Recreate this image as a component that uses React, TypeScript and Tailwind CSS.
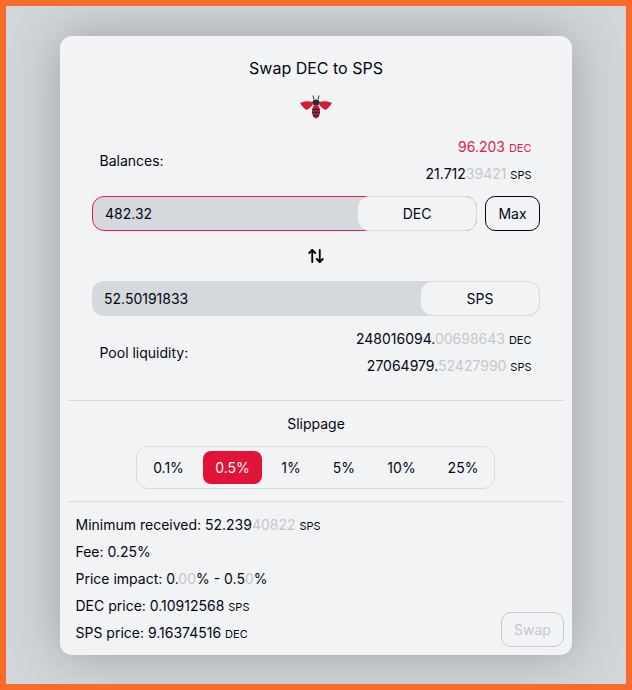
import React from 'react';
import { ArrowUpDown } from 'lucide-react';

const Unit = ({ children, className = '' }: { children: React.ReactNode; className?: string }) => (
  <span className={`text-[11px] leading-none ${className}`}>{children}</span>
);

const Dim = ({ children }: { children: React.ReactNode }) => <span className="text-[#c5c8cd]">{children}</span>;

const Bee = () => (
  <svg width="34" height="26" viewBox="0 0 34 26">
    <path d="M14 1.5 L15 5.5 M20 1.5 L19 5.5" stroke="#4b5563" strokeWidth="1.1" fill="none" />
    <path d="M1 9 C5 7 10 7 14 8 L13.5 11.5 L8 16 C5 15 3 12 1 9 Z" fill="#d01f36" />
    <path d="M33 9 C29 7 24 7 20 8 L20.5 11.5 L26 16 C29 15 31 12 33 9 Z" fill="#d01f36" />
    <ellipse cx="17" cy="8.5" rx="3.5" ry="3" fill="#2b2b33" />
    <ellipse cx="17" cy="17.5" rx="4" ry="7" fill="#c81e33" />
    <path d="M13.2 15.5 H20.8 M13 18.5 H21 M14 21.5 H20" stroke="#2b2b33" strokeWidth="1.3" />
  </svg>
);

const slippage = ['0.1%', '0.5%', '1%', '5%', '10%', '25%'];

export default function App() {
  return (
    <div className="h-[690px] w-[632px] border-[6px] border-[#f96b2a] bg-[#d2d6da] pt-[30px] font-['Inter',sans-serif] text-sm text-[#030712] overflow-hidden">
      <div className="mx-auto flex h-[619px] w-[512px] flex-col rounded-xl bg-[#f2f3f5] px-2 shadow-[0_0_50px_0_rgba(0,0,0,0.25)]">
        <h2 className="mt-[22px] text-center text-base leading-5">Swap DEC to SPS</h2>
        <div className="mt-[16px] flex justify-center">
          <Bee />
        </div>

        <div className="mt-[17px] flex items-center justify-between pl-[31.5px] pr-[32.5px]">
          <span>Balances:</span>
          <div className="flex flex-col items-end gap-[7px]">
            <div className="leading-5 text-[#e11d48]">
              96.203 <Unit>DEC</Unit>
            </div>
            <div className="leading-5">
              21.712<Dim>39421</Dim> <Unit>SPS</Unit>
            </div>
          </div>
        </div>

        <div className="mt-[12px] flex items-center px-6 gap-2">
          <div className="flex h-[35px] flex-1 items-center justify-between rounded-xl border border-[#e11d48] bg-[#d5d8dc] pl-3">
            <span>482.32</span>
            <div className="flex h-[35px] w-[120px] items-center justify-center rounded-xl border border-[#d9dbe2] bg-[#f2f3f5] -mr-px">DEC</div>
          </div>
          <button className="h-[35px] w-[55px] rounded-[10px] border border-[#030712] bg-transparent">Max</button>
        </div>

        <div className="mt-[16px] flex justify-center">
          <ArrowUpDown size={18} strokeWidth={2.5} className="text-black" />
        </div>

        <div className="mt-[16px] px-6">
          <div className="flex h-[35px] items-center justify-between rounded-xl bg-[#d5d8dc] pl-3">
            <span>52.50191833</span>
            <div className="flex h-[35px] w-[120px] items-center justify-center rounded-xl border border-[#d9dbe2] bg-[#f2f3f5]">SPS</div>
          </div>
        </div>

        <div className="mt-[13px] flex items-center justify-between pl-[31.5px] pr-[32.5px]">
          <span>Pool liquidity:</span>
          <div className="flex flex-col items-end gap-[7px]">
            <div className="leading-5">
              248016094.<Dim>00698643</Dim> <Unit>DEC</Unit>
            </div>
            <div className="leading-5">
              27064979.<Dim>52427990</Dim> <Unit>SPS</Unit>
            </div>
          </div>
        </div>

        <div className="mt-[24px] border-t border-[#d9dbe0]" />
        <div className="mt-[13px] text-center leading-5">Slippage</div>
        <div className="mt-[12px] flex justify-center">
          <div className="-ml-[2px] flex h-[43px] w-[359px] items-center rounded-xl border border-[#d9dbe0] pl-[4px]">
            {slippage.map((s, i) => (
              <span
                key={s}
                className={
                  i === 1
                    ? 'flex h-[33px] w-[59px] items-center justify-center rounded-lg bg-[#e11338] pl-px text-white'
                    : `flex h-[33px] items-center justify-center ${['w-[62px] pr-[6px]', '', 'w-[58px] pl-px', 'w-[49px]', 'w-[65px] pl-px', 'w-[58px] pl-px'][i]}`
                }
              >
                {s}
              </span>
            ))}
          </div>
        </div>
        <div className="mt-[12px] border-t border-[#d9dbe0]" />

        <div className="relative flex-1 pl-[7.5px] pt-[13px]">
          <div className="flex flex-col gap-[7px] leading-5">
            <div>
              Minimum received: 52.239<Dim>40822</Dim> <Unit>SPS</Unit>
            </div>
            <div>Fee: 0.25%</div>
            <div>
              Price impact: 0.<Dim>00</Dim>% - 0.5<Dim>0</Dim>%
            </div>
            <div>
              DEC price: 0.10912568 <Unit>SPS</Unit>
            </div>
            <div>
              SPS price: 9.16374516 <Unit>DEC</Unit>
            </div>
          </div>
          <button className="absolute bottom-[8px] right-0 h-[35px] w-[63px] rounded-[10px] border border-[#c3c9d2] text-[#c5c8cd]">Swap</button>
        </div>
      </div>
    </div>
  );
}
